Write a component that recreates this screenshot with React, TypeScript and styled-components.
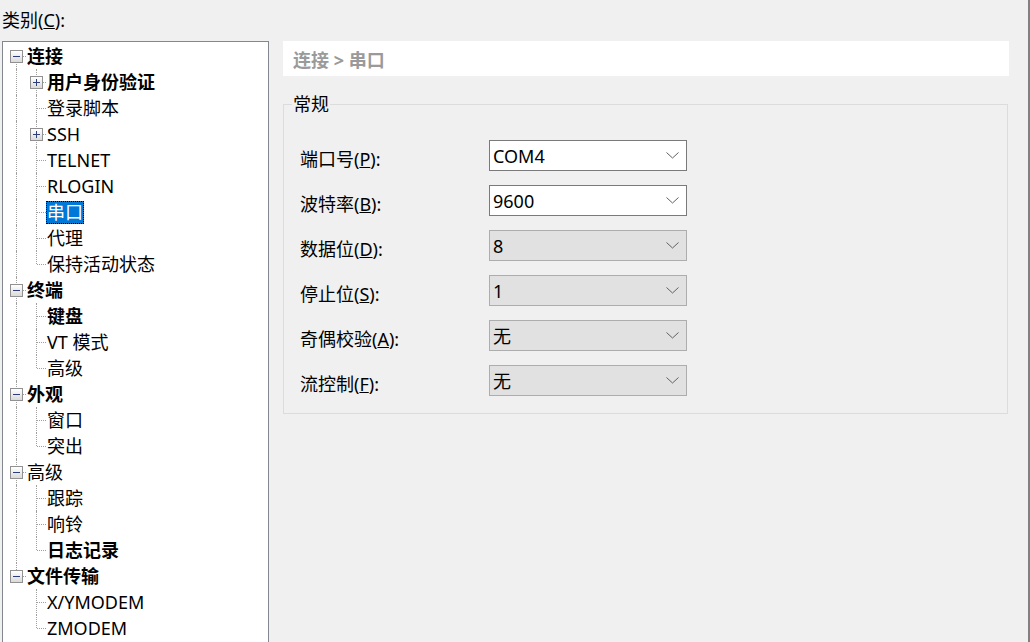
import React from 'react';
import styled, { createGlobalStyle } from 'styled-components';

const Global = createGlobalStyle`
  html, body { margin: 0; padding: 0; background: #f0f0f0; }
  body { font-family: "Noto Sans", "Noto Sans CJK SC", sans-serif; font-size: 18px; color: #000; }
  * { box-sizing: border-box; }
`;

const Window = styled.div`
  width: 1030px;
  height: 642px;
  overflow: hidden;
  background: #f0f0f0;
  border-right: 2px solid #808080;
  display: flex;
  flex-direction: column;
`;

const TopLabel = styled.div`
  height: 41px;
  padding: 8px 0 0 2px;
  line-height: 24px;
  flex: none;
`;

const Body = styled.div`
  flex: 1;
  display: flex;
  min-height: 0;
`;

const TreePanel = styled.div`
  width: 267px;
  margin-left: 2px;
  background: #fff;
  border: 1px solid #828790;
  border-bottom: none;
  padding: 1px 0 0 3px;
  overflow: hidden;
  flex: none;
`;

const Row = styled.div`
  display: flex;
  align-items: center;
  height: 26px;
`;

const Cell = styled.span<{ $up?: boolean; $down?: boolean; $right?: boolean }>`
  position: relative;
  width: 20px;
  height: 26px;
  flex: none;
  display: flex;
  align-items: center;
  &::before {
    content: '';
    display: ${p => (p.$up || p.$down ? 'block' : 'none')};
    position: absolute;
    left: 10px;
    top: ${p => (p.$up ? '0' : '13px')};
    bottom: ${p => (p.$down ? '0' : '13px')};
    border-left: 1px dotted #a0a0a0;
  }
  &::after {
    content: '';
    display: ${p => (p.$right ? 'block' : 'none')};
    position: absolute;
    left: 11px;
    right: 0;
    top: 13px;
    border-top: 1px dotted #a0a0a0;
  }
`;

const ExpandBox = styled.span<{ $open: boolean }>`
  position: relative;
  z-index: 1;
  margin-left: 4px;
  width: 13px;
  height: 13px;
  border: 1px solid #919191;
  background: linear-gradient(#ffffff, #dadada);
  &::before {
    content: '';
    position: absolute;
    left: 2px;
    top: 5px;
    width: 7px;
    height: 1px;
    background: #2c3f7c;
  }
  &::after {
    content: '';
    display: ${p => (p.$open ? 'none' : 'block')};
    position: absolute;
    left: 5px;
    top: 2px;
    width: 1px;
    height: 7px;
    background: #2c3f7c;
  }
`;

const NodeLabel = styled.span<{ $bold?: boolean; $selected?: boolean }>`
  margin-left: 0;
  padding: 0 1px;
  height: 23px;
  line-height: 23px;
  white-space: nowrap;
  font-weight: ${p => (p.$bold ? 700 : 400)};
  background: ${p => (p.$selected ? '#0078d7' : 'transparent')};
  color: ${p => (p.$selected ? '#fff' : '#000')};
  outline: ${p => (p.$selected ? '1px dotted #000' : 'none')};
  outline-offset: -1px;
`;

const Content = styled.div`
  flex: 1;
  padding: 0 19px 0 14px;
  display: flex;
  flex-direction: column;
`;

const Header = styled.div`
  height: 35px;
  background: #fff;
  padding-left: 10px;
  display: flex;
  align-items: center;
  font-weight: 700;
  color: #9a9a9a;
`;

const Group = styled.fieldset`
  margin: 18px 1px 0 0;
  padding: 26px 0 17px 16px;
  border: 1px solid #dcdcdc;
  min-width: 0;
`;

const Legend = styled.legend`
  margin-left: -8px;
  padding: 0 1px;
  line-height: 20px;
`;

const FormGrid = styled.div`
  display: grid;
  grid-template-columns: 189px 198px;
  row-gap: 14px;
  align-items: center;
`;

const FieldLabel = styled.label`
  padding-top: 6px;
  line-height: 22px;
  white-space: nowrap;
`;

const Combo = styled.div<{ $enabled: boolean }>`
  height: 31px;
  display: flex;
  align-items: center;
  justify-content: space-between;
  padding: 0 7px 0 3px;
  border: 1px solid ${p => (p.$enabled ? '#7a7a7a' : '#adadad')};
  background: ${p => (p.$enabled ? '#ffffff' : '#e1e1e1')};
  line-height: 22px;
`;

const Chevron = () => (
  <svg width="13" height="7" viewBox="0 0 13 7">
    <polyline points="0.5,0.5 6.5,6 12.5,0.5" fill="none" stroke="#606060" strokeWidth="1" />
  </svg>
);

type Node = { label: string; bold?: boolean; selected?: boolean; collapsed?: boolean; children?: Node[] };

const tree: Node[] = [
  {
    label: '连接', bold: true, children: [
      { label: '用户身份验证', bold: true, collapsed: true },
      { label: '登录脚本' },
      { label: 'SSH', collapsed: true },
      { label: 'TELNET' },
      { label: 'RLOGIN' },
      { label: '串口', selected: true },
      { label: '代理' },
      { label: '保持活动状态' },
    ],
  },
  { label: '终端', bold: true, children: [{ label: '键盘', bold: true }, { label: 'VT 模式' }, { label: '高级' }] },
  { label: '外观', bold: true, children: [{ label: '窗口' }, { label: '突出' }] },
  { label: '高级', children: [{ label: '跟踪' }, { label: '响铃' }, { label: '日志记录', bold: true }] },
  { label: '文件传输', bold: true, children: [{ label: 'X/YMODEM' }, { label: 'ZMODEM' }] },
];

const fields: { label: string; key: string; value: string; enabled: boolean }[] = [
  { label: '端口号', key: 'P', value: 'COM4', enabled: true },
  { label: '波特率', key: 'B', value: '9600', enabled: true },
  { label: '数据位', key: 'D', value: '8', enabled: false },
  { label: '停止位', key: 'S', value: '1', enabled: false },
  { label: '奇偶校验', key: 'A', value: '无', enabled: false },
  { label: '流控制', key: 'F', value: '无', enabled: false },
];

function Tree() {
  const rows: React.ReactNode[] = [];
  tree.forEach((root, i) => {
    const lastRoot = i === tree.length - 1;
    rows.push(
      <Row key={root.label + i}>
        <Cell $up={i > 0} $down={!lastRoot} $right>
          <ExpandBox $open />
        </Cell>
        <NodeLabel $bold={root.bold}>{root.label}</NodeLabel>
      </Row>
    );
    (root.children || []).forEach((c, j) => {
      const lastChild = j === (root.children || []).length - 1;
      rows.push(
        <Row key={root.label + c.label}>
          <Cell $up={!lastRoot} $down={!lastRoot} />
          <Cell $up $down={!lastChild} $right>
            {c.collapsed && <ExpandBox $open={false} />}
          </Cell>
          <NodeLabel $bold={c.bold} $selected={c.selected}>{c.label}</NodeLabel>
        </Row>
      );
    });
  });
  return <TreePanel>{rows}</TreePanel>;
}

export default function App() {
  return (
    <>
      <Global />
      <Window>
        <TopLabel>类别(<u>C</u>):</TopLabel>
        <Body>
          <Tree />
          <Content>
            <Header>连接 &gt; 串口</Header>
            <Group>
              <Legend>常规</Legend>
              <FormGrid>
                {fields.map(f => (
                  <React.Fragment key={f.key}>
                    <FieldLabel>
                      {f.label}(<u>{f.key}</u>):
                    </FieldLabel>
                    <Combo $enabled={f.enabled}>
                      <span>{f.value}</span>
                      <Chevron />
                    </Combo>
                  </React.Fragment>
                ))}
              </FormGrid>
            </Group>
          </Content>
        </Body>
      </Window>
    </>
  );
}
